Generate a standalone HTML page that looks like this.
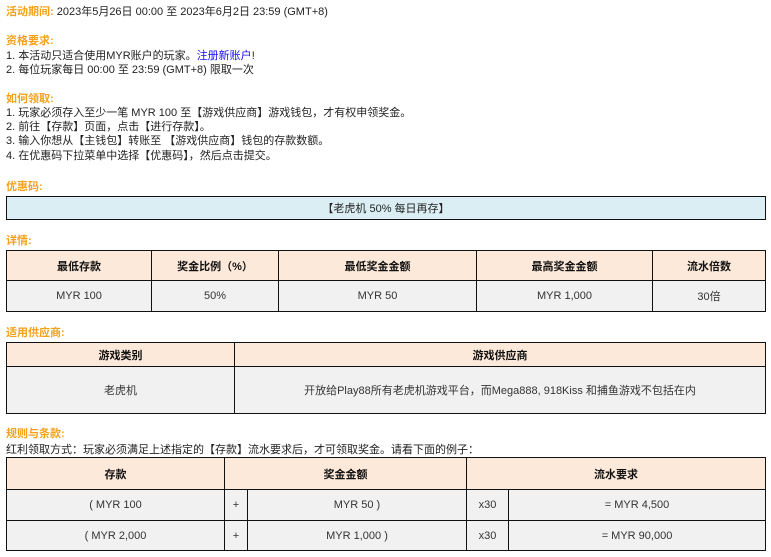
<!DOCTYPE html>
<html><head><meta charset="utf-8"><style>
body{margin:0;width:771px;height:557px;background:#fff;font-family:"Liberation Sans","Noto Sans CJK SC",sans-serif;font-size:11px;color:#222;position:relative;overflow:hidden}
.t{position:absolute;left:6px;white-space:nowrap;line-height:14px}
.h{color:#f5a11c;font-weight:bold}
a{color:#1a0dff;text-decoration:none}
table{position:absolute;left:6px;width:760px;border-collapse:collapse;table-layout:fixed}
td{border:1.5px solid #111;text-align:center;font-size:11px;padding:0}
.hd td{background:#fde9d9;font-weight:bold;color:#111}
.dt td{background:#f1f1f1;color:#333}
</style></head><body>
<div class="t" style="top:5px"><span class="h">活动期间:</span> 2023年5月26日 00:00 至 2023年6月2日 23:59 (GMT+8)</div>
<div class="t h" style="top:34px">资格要求:</div>
<div class="t" style="top:49px">1. 本活动只适合使用MYR账户的玩家。<a>注册新账户</a>!</div>
<div class="t" style="top:63px">2. 每位玩家每日 00:00 至 23:59 (GMT+8) 限取一次</div>
<div class="t h" style="top:92px">如何领取:</div>
<div class="t" style="top:106px">1. 玩家必须存入至少一笔 MYR 100 至【游戏供应商】游戏钱包，才有权申领奖金。</div>
<div class="t" style="top:120px">2. 前往【存款】页面，点击【进行存款】。</div>
<div class="t" style="top:134px">3. 输入你想从【主钱包】转账至 【游戏供应商】钱包的存款数额。</div>
<div class="t" style="top:149px">4. 在优惠码下拉菜单中选择【优惠码】，然后点击提交。</div>
<div class="t h" style="top:180px">优惠码:</div>
<table style="top:196px;height:24px"><tr><td style="background:#daeef3;color:#222">【老虎机 50% 每日再存】</td></tr></table>
<div class="t h" style="top:234px">详情:</div>
<table style="top:250px">
<colgroup><col style="width:145px"><col style="width:127px"><col style="width:198px"><col style="width:176px"><col></colgroup>
<tr class="hd" style="height:30px"><td>最低存款</td><td>奖金比例（%）</td><td>最低奖金金额</td><td>最高奖金金额</td><td>流水倍数</td></tr>
<tr class="dt" style="height:31px"><td>MYR 100</td><td>50%</td><td>MYR 50</td><td>MYR 1,000</td><td>30倍</td></tr>
</table>
<div class="t h" style="top:326px">适用供应商:</div>
<table style="top:342px">
<colgroup><col style="width:228px"><col></colgroup>
<tr class="hd" style="height:24px"><td>游戏类别</td><td>游戏供应商</td></tr>
<tr class="dt" style="height:47px"><td>老虎机</td><td>开放给Play88所有老虎机游戏平台，而Mega888, 918Kiss 和捕鱼游戏不包括在内</td></tr>
</table>
<div class="t h" style="top:427px">规则与条款:</div>
<div class="t" style="top:443px">红利领取方式：玩家必须满足上述指定的【存款】流水要求后，才可领取奖金。请看下面的例子：</div>
<table style="top:457px">
<colgroup><col style="width:218px"><col style="width:23px"><col style="width:219px"><col style="width:42px"><col></colgroup>
<tr class="hd" style="height:32px"><td>存款</td><td colspan="2">奖金金额</td><td colspan="2">流水要求</td></tr>
<tr class="dt" style="height:31px"><td>( MYR 100</td><td>+</td><td>MYR 50 )</td><td>x30</td><td>= MYR 4,500</td></tr>
<tr class="dt" style="height:30px"><td>( MYR 2,000</td><td>+</td><td>MYR 1,000 )</td><td>x30</td><td>= MYR 90,000</td></tr>
</table>
</body></html>
